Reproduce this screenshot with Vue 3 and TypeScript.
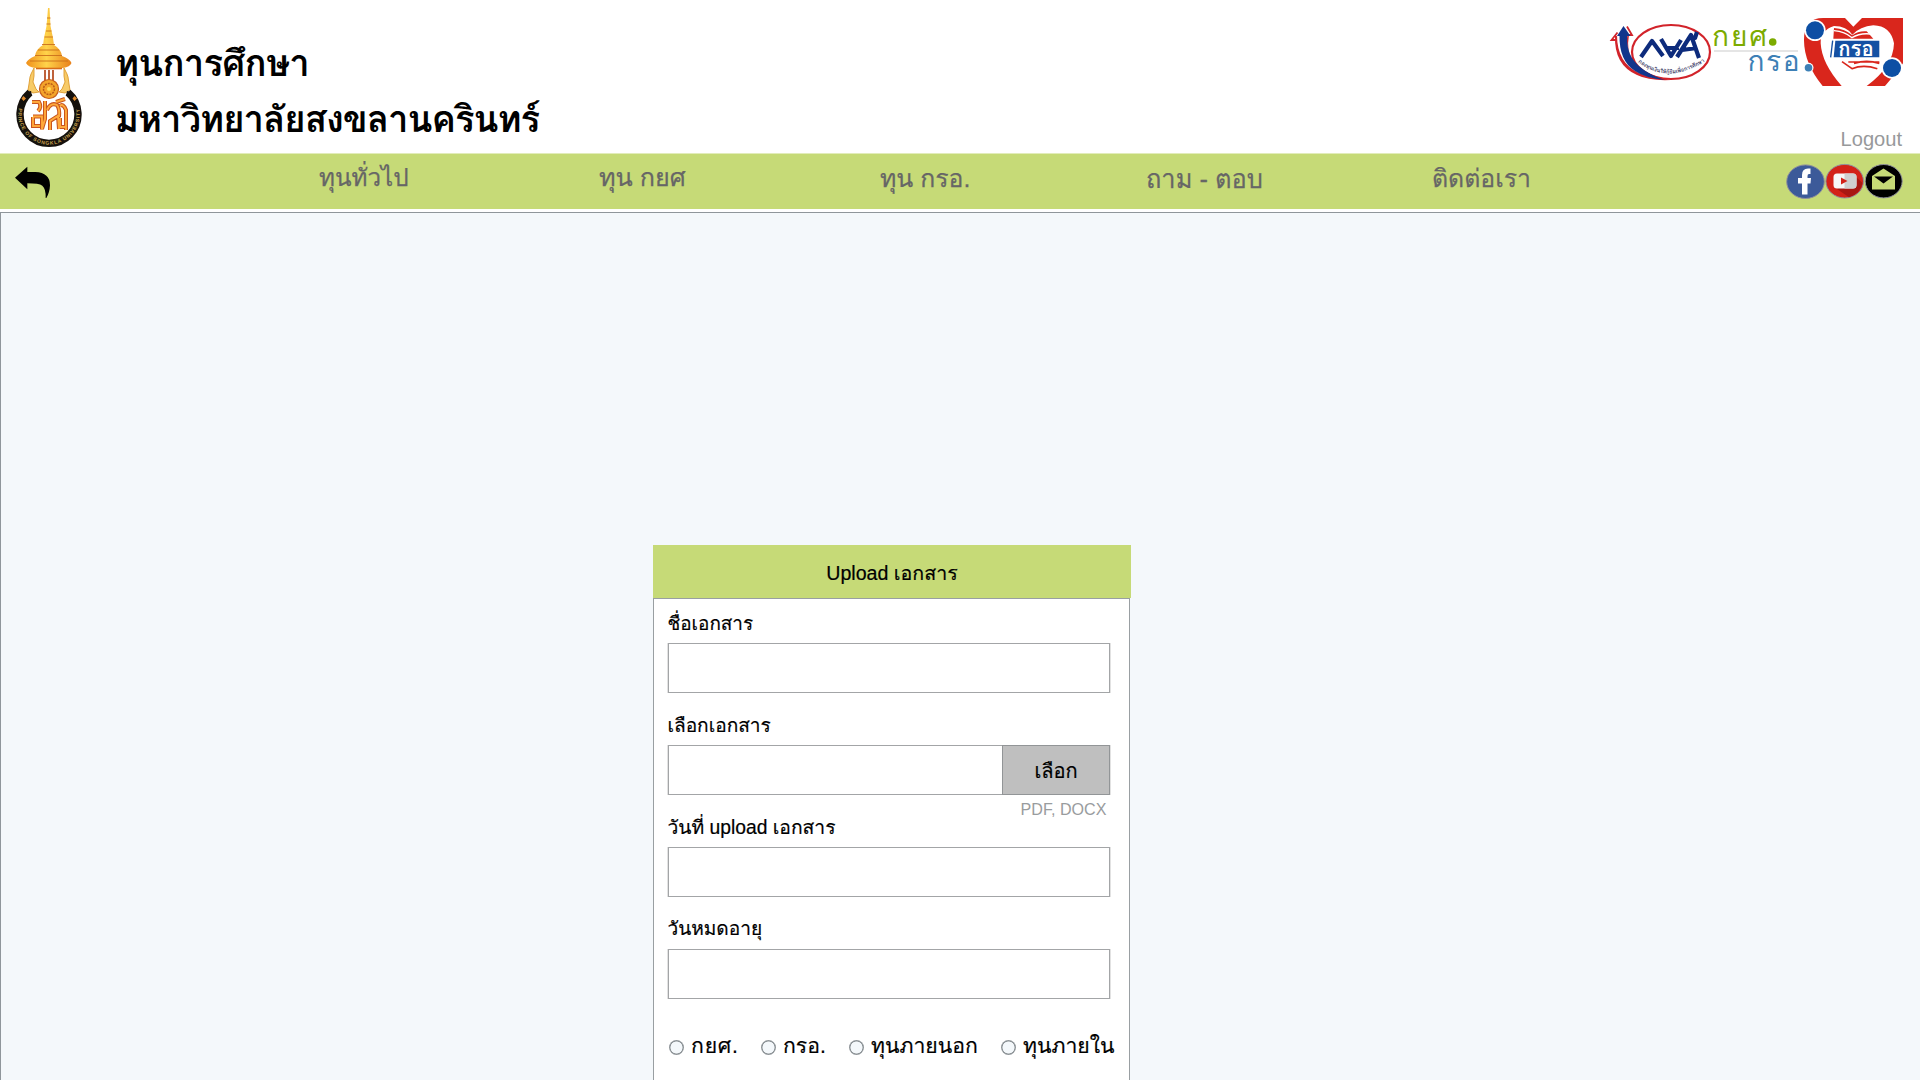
<script setup lang="ts">
interface Item { text: string; cls: string }

const menu: Item[] = [
  { text: 'ทุนทั่วไป', cls: 'general' },
  { text: 'ทุน กยศ', cls: 'kys' },
  { text: 'ทุน กรอ.', cls: 'kro' },
  { text: 'ถาม - ตอบ', cls: 'faq' },
  { text: 'ติดต่อเรา', cls: 'contact' },
]

const funds: Item[] = [
  { text: 'กยศ.', cls: 'spaced' },
  { text: 'กรอ.', cls: '' },
  { text: 'ทุนภายนอก', cls: '' },
  { text: 'ทุนภายใน', cls: '' },
]
</script>

<template>
  <div class="page">
    <header class="top">
      <svg class="seal" width="68" height="144" viewBox="0 0 68 144">
        <defs>
          <linearGradient id="gold" x1="0" x2="1" y1="0" y2="0">
            <stop offset="0" stop-color="#f0901c" />
            <stop offset=".45" stop-color="#ffd34a" />
            <stop offset="1" stop-color="#e8801a" />
          </linearGradient>
          <path id="ring" d="M4 97.500 A30.800 30.800 0 1 0 62 97.500" />
        </defs>
        <path d="M32 2 L33.500 2 L34.500 20 L37 32 L38 39 Q45 43 46 50 Q54 53 55.500 57 Q54 61 47 62 L19 62 Q12 61 10 57 Q12 53 19 50 Q20 43 27 39 L28 32 L30.500 20 Z" fill="url(#gold)" />
        <path d="M31 12h3.500M30.500 18h4M30 25h5.500M28.500 31h8.500M26 38.500h13M22 44h21M19 49.500h27M14 55h38" stroke="#c96f1c" stroke-width=".9" fill="none" />
        <path d="M20 62.500h26" stroke="#d86c18" stroke-width="1.600" fill="none" />
        <path d="M29 64v12M33 64v12M37 64v12" stroke="#b85228" stroke-width="1.800" />
        <path d="M18 62l-3 6-1 3-1 7-1 6 5 3 6-1-3-3-3-7 1-6zM48 62l3 6 1 3 1 7 1 6-5 3-6-1 3-3 3-7-1-6z" fill="#f7cb68" stroke="#dc9a2c" stroke-width=".9" />
        <circle cx="33" cy="83" r="9.500" fill="#f4a52a" stroke="#c65e1d" stroke-width="1.200" />
        <circle cx="33" cy="83" r="5.500" fill="none" stroke="#b95b17" stroke-width="1.500" stroke-dasharray="2 1" />
        <circle cx="33" cy="83" r="2" fill="#ffdc58" />
        <path d="M14 86.500 A29 29 0 1 0 52 86.500" fill="none" stroke="#15110c" stroke-width="7.400" />
        <path d="M10 86l5-1 1 5zM56 86l-5-1-1 5z" fill="#15110c" />
        <path d="M7.500 90l2.500 2.500-2.500 2.500-2-2.500zM58.500 90l2.500 2.500-2.500 2.500-2-2.500z" fill="#e08a2c" />
        <text class="ring-text"><textPath href="#ring" startOffset="5" textLength="107">PRINCE OF SONGKLA UNIVERSITY</textPath></text>
        <g fill="none" stroke="#c9551e" stroke-width="4">
          <path d="M16 96h7q3 5-1 9M17 110.500h9v13M17 111v9h7M29 95v18l-3 10M34 124v-9l8-5 1 13M31 104q4-8 10-5 3 4 2 12M40 96l9-3M50 124v-20q-3-7-6-4M50 121h-6v-9" />
        </g>
        <g fill="none" stroke="#ffa93b" stroke-width="1.900">
          <path d="M16 96h7q3 5-1 9M17 110.500h9v13M17 111v9h7M29 95v18l-3 10M34 124v-9l8-5 1 13M31 104q4-8 10-5 3 4 2 12M40 96l9-3M50 124v-20q-3-7-6-4M50 121h-6v-9" />
        </g>
      </svg>
      <h1 class="title">
        <span>ทุนการศึกษา</span>
        <span class="university">มหาวิทยาลัยสงขลานครินทร์</span>
      </h1>
      <div class="account">
        <svg class="partners" width="300" height="75" viewBox="0 0 300 75">
          <defs>
            <path id="arc" d="M33 47 Q62 70 99 47" />
            <clipPath id="heart-box"><rect x="612" y="54" width="297" height="204" /></clipPath>
          </defs>
          <!-- student loan fund emblem -->
          <ellipse cx="66" cy="37" rx="39" ry="27" fill="#fff" stroke="#d2232a" stroke-width="2.200" />
          <path d="M10 21 Q9 50 32 60 Q44 66 66 65 Q40 61 28 46 Q21 36 24 20 Z" fill="#d2232a" />
          <path d="M12 20 Q12 48 34 58 L48 63 Q32 54 27 44 Q20 33 22.500 18 Z" fill="#fff" />
          <path d="M14.500 20 Q14 46 30 56 Q40 63 60 65 Q36 57 27 43 Q21 33 22.300 19 Z" fill="#12358c" />
          <path d="M12.500 17.500 L6.500 25 H11M22 11.500l5 8.500h-3.500" fill="none" stroke="#d2232a" stroke-width="1.800" />
          <path d="M18.500 11 L25.500 21 L12 21 Z" fill="#12358c" />
          <g fill="none" stroke="#0d2b7c" stroke-width="4.200" stroke-linejoin="round">
            <path d="M36 42 L47 26 L58 41 M56 24 L66 41 L76 25 M60 33H74 M72 42 L86 20 L94 43 M77 35L92 33 M84 22L90 23L92 17" />
          </g>
          <text class="arc-text"><textPath href="#arc" textLength="72">กองทุนเงินให้กู้ยืมเพื่อการศึกษา</textPath></text>
          <!-- word marks -->
          <text class="mark green" x="107" y="30.500" textLength="55">กยศ</text>
          <circle cx="167.700" cy="27" r="3.800" fill="#7cab00" />
          <path d="M109 36h84" stroke="#dcdcdc" stroke-width="1.600" />
          <text class="mark blue" x="142.500" y="56" textLength="52">กรอ</text>
          <!-- heart emblem -->
          <g transform="translate(-5 -15) scale(.33333)" clip-path="url(#heart-box)">
            <path d="M612 120 Q612 54 670 54 H735 L760 80 L786 54 H909 V190 Q880 230 855 258 H668 Q612 190 612 120Z" fill="#d9261c" />
            <path d="M757 104 Q740 78 702 78 Q660 92 662 130 Q665 190 725 258 L800 258 Q880 200 882 130 Q872 78 820 76 Q780 80 757 104Z" fill="#fff" />
            <path d="M702 84 Q735 86 757 106 Q775 92 800 94 L820 116 L700 116Z" fill="#d9261c" />
            <path d="M702 92 Q735 95 756 113 Q780 98 812 102" stroke="#fff" stroke-width="4" fill="none" />
            <rect x="686" y="117" width="156" height="59" fill="#fff" />
            <path d="M706 122H838V172H701Z" fill="#1450a3" />
            <path d="M698 122L692 172" stroke="#1450a3" stroke-width="4" />
            <path d="M726 185 L756 206 Q790 192 832 206 M745 186 H838 M762 190 Q800 178 838 190" stroke="#d9261c" stroke-width="5" fill="none" />
            <circle cx="645" cy="91" r="32" fill="#fff" />
            <circle cx="645" cy="91" r="27" fill="#0d4fa4" />
            <circle cx="876" cy="204" r="32" fill="#fff" />
            <circle cx="876" cy="204" r="27" fill="#0d4fa4" />
            <text class="badge" x="715" y="167" textLength="106" lengthAdjust="spacingAndGlyphs">กรอ</text>
          </g>
          <circle cx="203.500" cy="52.700" r="5" fill="#fff" />
          <circle cx="203.500" cy="52.700" r="3.800" fill="#3d80b6" />
        </svg>
        <a class="logout">Logout</a>
      </div>
    </header>

    <nav class="bar">
      <svg class="back" width="36" height="33" viewBox="45 498 108 99">
        <path d="M45 533 L82 500 V516 H106 Q150 518 150 556 Q149 578 139 594 H137 Q138 566 127 557 Q117 550 82 550 V568 Z" />
      </svg>
      <a v-for="m in menu" :key="m.cls" :class="m.cls">{{ m.text }}</a>
      <svg class="social" width="118" height="37" viewBox="0 0 118 37">
        <g stroke="#8f8f9d" stroke-width="1">
          <ellipse cx="19.500" cy="18.700" rx="18.800" ry="16.800" fill="#3c5a99" />
          <ellipse cx="58.700" cy="18.200" rx="18.800" ry="16.800" fill="#d32118" />
          <ellipse cx="97.700" cy="18.200" rx="18.500" ry="16.700" fill="#000" />
        </g>
        <path d="M16 31.500V20.500H12V15H16V12Q16 5.500 22 5.500H24.500V11H23Q21.500 11 21.500 13V15H25L24.500 20.500H21.500V31.500Z" fill="#fff" />
        <path d="M69 13L76.500 20Q74 31 63 34.300L51 26Z" fill="#a81712" />
        <rect x="47.500" y="10.500" width="23" height="15" rx="3.500" fill="#f7f7f7" />
        <path d="M58.500 10.500H67Q70.500 10.500 70.500 14V22Q70.500 25.500 67 25.500H58.500Z" fill="#cfcfcf" />
        <path d="M55 14.500V21.500L61.500 18Z" fill="#d32118" />
        <path d="M86 13L97.500 5.500L109 13V26.500H86Z" fill="#c6da77" />
        <path d="M88 13.500H107L97.500 20.500Z" fill="#000" />
      </svg>
    </nav>

    <main class="body">
      <section class="card">
        <h2 class="card-head">Upload เอกสาร</h2>
        <form class="card-body" @submit.prevent>
          <div class="label first"><span class="name">ชื่อเอกสาร</span></div>
          <div class="box"></div>

          <div class="label"><span class="choose">เลือกเอกสาร</span></div>
          <div class="box file"><button type="button" class="pick">เลือก</button></div>

          <div class="label"><span class="date">วันที่ upload เอกสาร</span><small class="hint">PDF, DOCX</small></div>
          <div class="box"></div>

          <div class="label"><span class="expiry">วันหมดอายุ</span></div>
          <div class="box"></div>

          <div class="radios">
            <label v-for="f in funds" :key="f.text" class="radio">
              <i class="dot"></i><span :class="f.cls">{{ f.text }}</span>
            </label>
          </div>
        </form>
      </section>
    </main>
  </div>
</template>

<style>
body { background: #fff; overflow: hidden; }
</style>

<style scoped>
.page {
  width: 1920px;
  height: 1080px;
  overflow: hidden;
  display: flex;
  flex-direction: column;
  background: #fff;
  font-family: "Liberation Sans", Loma, sans-serif;
  color: #000;
}
.top { display: flex; height: 153px; flex: none; }
.seal { flex: none; margin: 6px 0 0 16px; }
.ring-text { font-size: 5px; font-weight: bold; fill: #c8a24e; }
.title {
  display: flex;
  flex-direction: column;
  margin: 36px 0 0 31px;
  font-size: 36.5px;
  line-height: 56px;
  letter-spacing: -0.8px;
  font-weight: bold;
  white-space: nowrap;
}
.university { letter-spacing: -1px; }
.account {
  display: flex;
  flex-direction: column;
  align-items: flex-end;
  margin-left: auto;
  padding: 15px 15px 0 0;
}
.arc-text { font-size: 5.5px; font-weight: bold; fill: #3c3c66; }
.mark { font-size: 28px; }
.green { fill: #7cab00; }
.blue { fill: #3d80b6; }
.badge { font-size: 64px; font-weight: bold; fill: #fff; }
.logout { margin: 37px 3px 0 0; font-size: 20.1px; line-height: 24px; color: #97999b; }

.bar {
  display: grid;
  grid-template-columns: 319px 280px 281px 266px 286px 354px 118px;
  height: 55px;
  flex: none;
  border-top: 1px solid #e2ecba;
  background: #c6da77;
  font-size: 25.2px;
  line-height: 48px;
  white-space: nowrap;
  color: #666;
  -webkit-text-stroke: .25px #666;
}
.back { margin: 12px 0 0 15px; fill: #000; }
.general { font-size: 24.2px; }
.kys { margin-top: -1px; }
.kro { font-size: 24.8px; }
.kro, .faq, .contact { margin-top: 1px; }
.faq { font-size: 25.4px; }
.contact { font-size: 24.8px; }
.social { margin-top: 9px; }

.body {
  display: flex;
  align-items: flex-start;
  flex: 1;
  margin-top: 3px;
  padding-left: 652px;
  border-top: 1px solid #8f969b;
  border-left: 1px solid #8f969b;
  background: #f4f8fb;
}
.card { width: 478px; margin-top: 332px; -webkit-text-stroke: .2px currentColor; }
.card-head {
  height: 53px;
  margin: 0;
  background: #c6da77;
  font-size: 19.6px;
  font-weight: normal;
  line-height: 56px;
  text-align: center;
}
.card-body {
  box-sizing: border-box;
  width: 477px;
  height: 520px;
  padding: 0 0 0 14px;
  border: 1px solid #999fa2;
  background: #fff;
}
.label {
  display: flex;
  justify-content: space-between;
  align-items: flex-end;
  box-sizing: border-box;
  width: 443px;
  height: 52px;
  margin-left: -.6px;
  padding-bottom: 6px;
  line-height: 26px;
  white-space: nowrap;
}
.label.first { height: 44px; }
.name { font-size: 18.9px; }
.choose { font-size: 19.1px; }
.date { font-size: 19.3px; }
.expiry { font-size: 19.1px; margin-bottom: 1px; }
.hint { align-self: flex-start; margin: 1px 4px 0 0; font-size: 16.1px; color: #999c9e; -webkit-text-stroke: 0; }
.box {
  box-sizing: border-box;
  width: 442px;
  height: 50px;
  border: 1px solid #a3a5a7;
  box-shadow: -1px 0 #e2e2e2, 1px 0 #e2e2e2;
}
.file { display: flex; justify-content: flex-end; }
.pick {
  box-sizing: border-box;
  width: 108px;
  height: 50px;
  margin: -1px;
  padding: 0;
  border: 1px solid #929597;
  background: #bfbfbf;
  font: 20px/51px "Liberation Sans", Loma, sans-serif;
  color: #000;
}
.radios {
  display: grid;
  grid-template-columns: 92px 88px 152px 110px;
  margin: 32px 0 0 1px;
  font-size: 21.2px;
  line-height: 30px;
  white-space: nowrap;
}
.radio { display: flex; gap: 7px; }
.dot {
  box-sizing: border-box;
  flex: none;
  width: 15px;
  height: 15px;
  margin-top: 9px;
  border-radius: 50%;
  background: radial-gradient(circle, #f4f8fb 5.7px, #8f9599 6.3px);
}
.spaced { letter-spacing: .8px; }
</style>
